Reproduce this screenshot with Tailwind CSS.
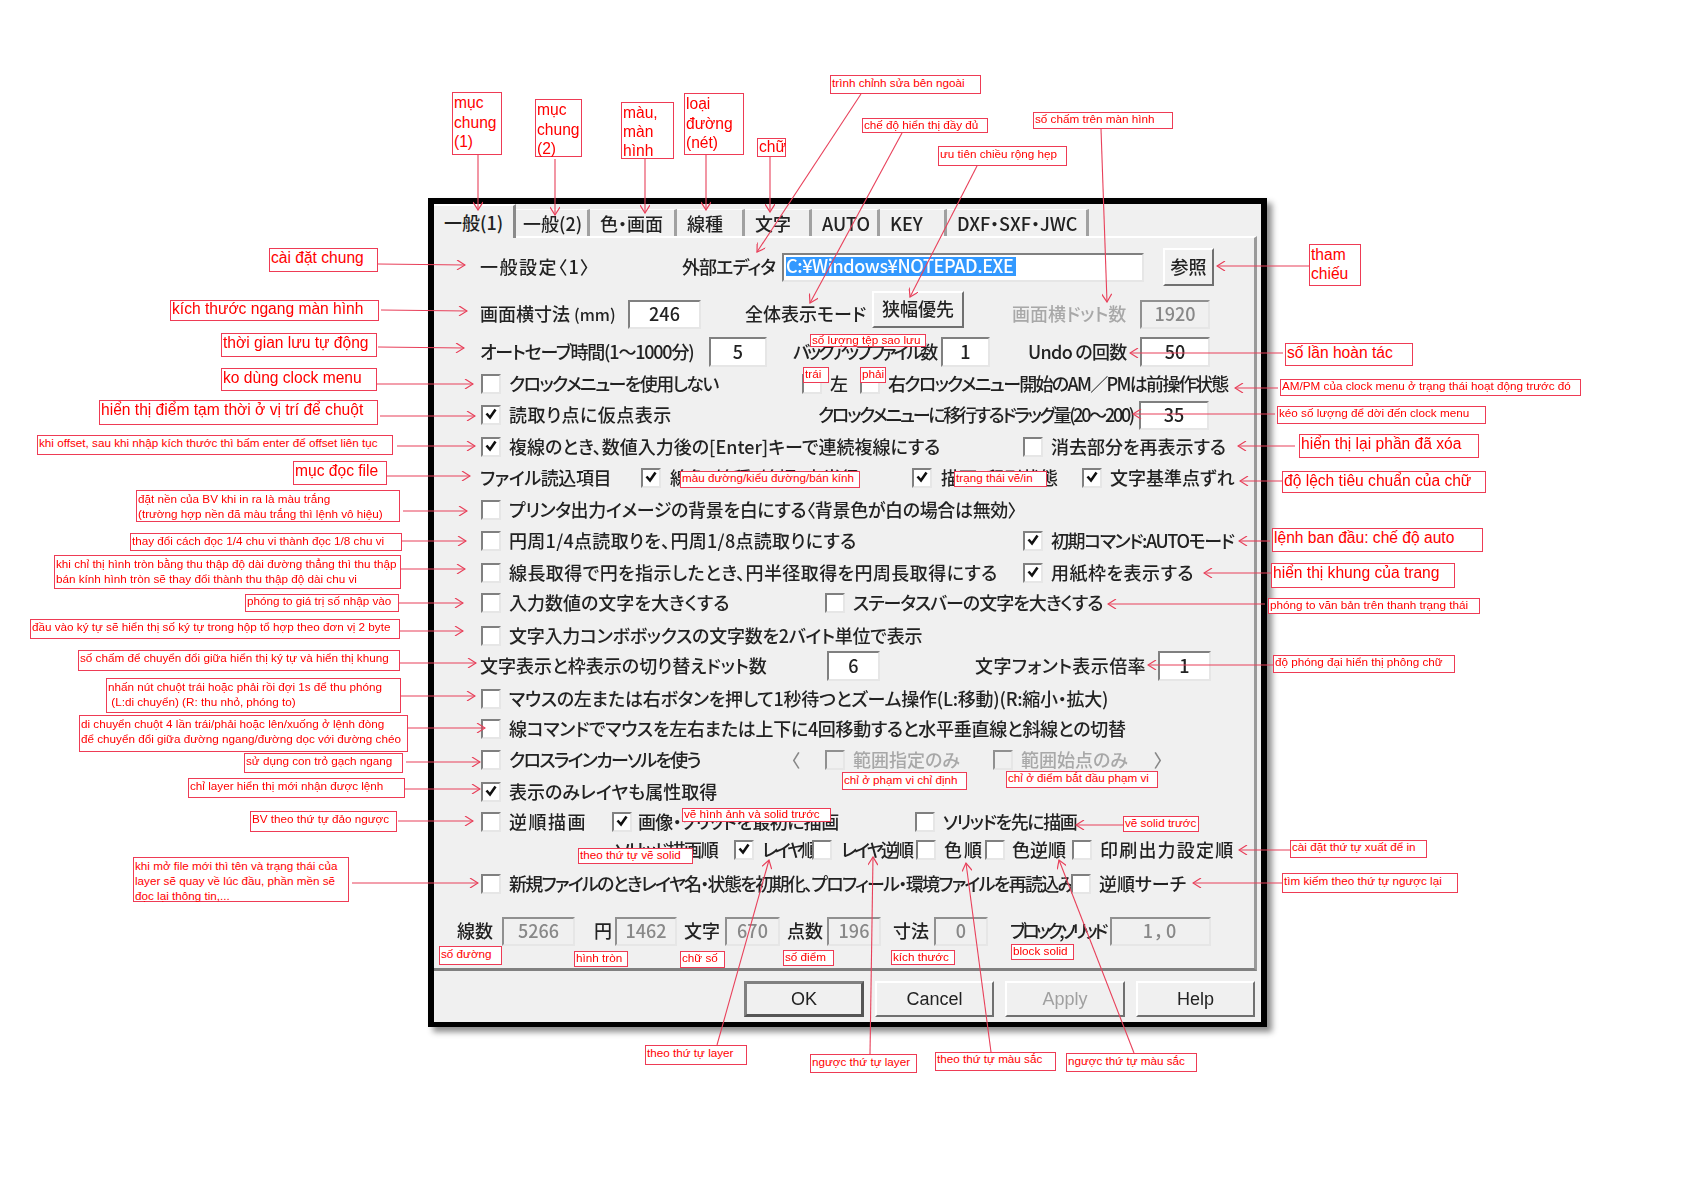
<!DOCTYPE html>
<html lang="ja">
<head>
  <meta charset="UTF-8" />
  <title>一般(1)</title>
  <script src="https://cdn.jsdelivr.net/npm/@tailwindcss/browser@4"></script>
</head>
<body class="bg-white">
<div class="relative w-[1684px] h-[1191px] overflow-hidden bg-white">

  <!-- Dialog window -->
  <div class="absolute left-[428px] top-[198px] w-[839px] h-[829px] box-border border-[6px] border-b-[5px] border-black bg-[#f0f0f0] shadow-[5px_5px_6px_rgba(0,0,0,0.45)] text-[18px] leading-[24px] font-medium text-[#222] whitespace-nowrap font-['Noto_Sans_CJK_JP',sans-serif] [font-feature-settings:'palt'] blur-[0.4px]">

    <!-- Tabs -->
    <div class="flex items-end h-[32px]">
      <div class="relative flex items-center w-[82px] h-[34px] -mb-[2px] pl-[10px] bg-[#f0f0f0] border-t-2 border-t-white border-r-[3px] border-r-[#8a8a8a]">一般(1)</div>
      <div class="flex items-center w-[74px] h-[27px] pl-[7px] border-t border-t-white border-r-[3px] border-r-[#a0a0a0]">一般(2)</div>
      <div class="flex items-center w-[87px] h-[27px] pl-[10px] border-t border-t-white border-r-[3px] border-r-[#a0a0a0]">色・画面</div>
      <div class="flex items-center w-[68px] h-[27px] pl-[10px] border-t border-t-white border-r-[3px] border-r-[#a0a0a0]">線種</div>
      <div class="flex items-center w-[67px] h-[27px] pl-[10px] border-t border-t-white border-r-[3px] border-r-[#a0a0a0]">文字</div>
      <div class="flex items-center w-[68px] h-[27px] pl-[10px] border-t border-t-white border-r-[3px] border-r-[#a0a0a0]">AUTO</div>
      <div class="flex items-center w-[67px] h-[27px] pl-[10px] border-t border-t-white border-r-[3px] border-r-[#a0a0a0]">KEY</div>
      <div class="flex items-center w-[142px] h-[27px] pl-[10px] border-t border-t-white border-r-[3px] border-r-[#a0a0a0]">DXF・SXF・JWC</div>
    </div>

    <!-- Tab page -->
    <div class="box-border w-[823px] h-[735px] pt-[15px] pl-[46px] border-t-2 border-t-white border-r-[3px] border-r-[#9a9a9a] border-b-[3px] border-b-[#808080] [&_span]:pb-[2px]">

      <div class="flex items-center h-7">
        <span class="w-[107px] tracking-[1.5px]">一般設定〈1〉</span>
        <span class="ml-[95px] w-[93px] tracking-[-0.9px]">外部エディタ</span>
        <span class="ml-[7px] flex items-center box-border w-[362px] h-[29px] pl-[2px] bg-white border-2 border-t-[#808080] border-l-[#808080] border-r-[#e6e6e6] border-b-[#e6e6e6]"><span class="flex items-center w-[230px] h-[19px] bg-[#3399ff] text-white tracking-[-0.4px]">C:¥Windows¥NOTEPAD.EXE</span></span>
        <span class="ml-[19px] flex items-center justify-center box-border w-[51px] h-[38px] shrink-0 border-2 border-t-white border-l-white border-r-[#707070] border-b-[#707070]">参照</span>
      </div>

      <div class="flex items-center h-7 mt-[19px]">
        <span class="w-[137px]">画面横寸法 <span class="text-[16px]">(mm)</span></span>
        <span class="ml-[11px] flex items-center justify-center box-border w-[73px] h-[29px] bg-white border-2 border-t-[#808080] border-l-[#808080] border-r-[#e6e6e6] border-b-[#e6e6e6]">246</span>
        <span class="ml-[44px] w-[122px]">全体表示モード</span>
        <span class="ml-[5px] -mt-[10px] flex items-center justify-center box-border w-[92px] h-[37px] border-2 border-t-white border-l-white border-r-[#707070] border-b-[#707070]">狭幅優先</span>
        <span class="ml-[48px] w-[115px] text-[#a8a8a8]">画面横ドット数</span>
        <span class="ml-[13px] flex items-center justify-center box-border w-[70px] h-[29px] text-[#888] border-2 border-t-[#909090] border-l-[#909090] border-r-[#e6e6e6] border-b-[#e6e6e6]">1920</span>
      </div>

      <div class="flex items-center h-7 mt-[10px]">
        <span class="w-[213px] tracking-[-1.2px]">オートセーブ時間(1～1000分)</span>
        <span class="ml-[16px] flex items-center justify-center box-border w-[58px] h-[30px] bg-white border-2 border-t-[#808080] border-l-[#808080] border-r-[#e6e6e6] border-b-[#e6e6e6]">5</span>
        <span class="ml-[26px] w-[138px] tracking-[-3px]">バックアップファイル数</span>
        <span class="ml-[10px] flex items-center justify-center box-border w-[49px] h-[30px] bg-white border-2 border-t-[#808080] border-l-[#808080] border-r-[#e6e6e6] border-b-[#e6e6e6]">1</span>
        <span class="ml-[38px] w-[99px] tracking-[-0.7px]">Undo の回数</span>
        <span class="ml-[13px] flex items-center justify-center box-border w-[70px] h-[30px] bg-white border-2 border-t-[#808080] border-l-[#808080] border-r-[#e6e6e6] border-b-[#e6e6e6]">50</span>
      </div>

      <div class="flex items-center h-7 mt-[4px]">
        <span class="ml-[1px] box-border size-5 shrink-0 bg-white border-2 border-t-[#808080] border-l-[#808080] border-r-[#e6e6e6] border-b-[#e6e6e6]"></span>
        <span class="ml-[8px] w-[209px] tracking-[-1.6px]">クロックメニューを使用しない</span>
        <span class="ml-[84px] box-border size-5 shrink-0 bg-white border-2 border-t-[#808080] border-l-[#808080] border-r-[#e6e6e6] border-b-[#e6e6e6]"></span>
        <span class="ml-[8px] w-[19px]">左</span>
        <span class="ml-[11px] box-border size-5 shrink-0 bg-white border-2 border-t-[#808080] border-l-[#808080] border-r-[#e6e6e6] border-b-[#e6e6e6]"></span>
        <span class="ml-[8px] w-[341px] tracking-[-1.7px]">右クロックメニュー開始のAM／PMは前操作状態</span>
      </div>

      <div class="flex items-center h-7 mt-[3px]">
        <span class="ml-[1px] flex items-center justify-center box-border size-5 shrink-0 bg-white border-2 border-t-[#808080] border-l-[#808080] border-r-[#e6e6e6] border-b-[#e6e6e6]"><svg viewBox="0 0 14 14" class="size-[14px]"><path d="M2.5 6.5 L6 10.5 L11.5 2.5" fill="none" stroke="#111" stroke-width="2.6"/></svg></span>
        <span class="ml-[8px] w-[162px] tracking-[0.5px]">読取り点に仮点表示</span>
        <span class="ml-[147px] w-[314px] tracking-[-2.3px]">クロックメニューに移行するドラッグ量(20～200)</span>
        <span class="ml-[7px] flex items-center justify-center box-border w-[70px] h-[29px] bg-white border-2 border-t-[#808080] border-l-[#808080] border-r-[#e6e6e6] border-b-[#e6e6e6]">35</span>
      </div>

      <div class="flex items-center h-7 mt-[4px]">
        <span class="ml-[1px] flex items-center justify-center box-border size-5 shrink-0 bg-white border-2 border-t-[#808080] border-l-[#808080] border-r-[#e6e6e6] border-b-[#e6e6e6]"><svg viewBox="0 0 14 14" class="size-[14px]"><path d="M2.5 6.5 L6 10.5 L11.5 2.5" fill="none" stroke="#111" stroke-width="2.6"/></svg></span>
        <span class="ml-[8px] w-[428px]">複線のとき、数値入力後の[Enter]キーで連続複線にする</span>
        <span class="ml-[86px] box-border size-5 shrink-0 bg-white border-2 border-t-[#808080] border-l-[#808080] border-r-[#e6e6e6] border-b-[#e6e6e6]"></span>
        <span class="ml-[8px] w-[180px]">消去部分を再表示する</span>
      </div>

      <div class="flex items-center h-7 mt-[3px]">
        <span class="w-[129px] tracking-[-0.4px]">ファイル読込項目</span>
        <span class="ml-[32px] flex items-center justify-center box-border size-5 shrink-0 bg-white border-2 border-t-[#808080] border-l-[#808080] border-r-[#e6e6e6] border-b-[#e6e6e6]"><svg viewBox="0 0 14 14" class="size-[14px]"><path d="M2.5 6.5 L6 10.5 L11.5 2.5" fill="none" stroke="#111" stroke-width="2.6"/></svg></span>
        <span class="ml-[9px] w-[237px]">線色・線種・線幅・点半径</span>
        <span class="ml-[5px] flex items-center justify-center box-border size-5 shrink-0 bg-white border-2 border-t-[#808080] border-l-[#808080] border-r-[#e6e6e6] border-b-[#e6e6e6]"><svg viewBox="0 0 14 14" class="size-[14px]"><path d="M2.5 6.5 L6 10.5 L11.5 2.5" fill="none" stroke="#111" stroke-width="2.6"/></svg></span>
        <span class="ml-[9px] w-[123px]">描画・印刷状態</span>
        <span class="ml-[18px] flex items-center justify-center box-border size-5 shrink-0 bg-white border-2 border-t-[#808080] border-l-[#808080] border-r-[#e6e6e6] border-b-[#e6e6e6]"><svg viewBox="0 0 14 14" class="size-[14px]"><path d="M2.5 6.5 L6 10.5 L11.5 2.5" fill="none" stroke="#111" stroke-width="2.6"/></svg></span>
        <span class="ml-[8px] w-[127px]">文字基準点ずれ</span>
      </div>

      <div class="flex items-center h-7 mt-[4px]">
        <span class="ml-[1px] box-border size-5 shrink-0 bg-white border-2 border-t-[#808080] border-l-[#808080] border-r-[#e6e6e6] border-b-[#e6e6e6]"></span>
        <span class="ml-[8px] w-[505px] tracking-[-0.35px]">プリンタ出力イメージの背景を白にする〈背景色が白の場合は無効〉</span>
      </div>

      <div class="flex items-center h-7 mt-[3px]">
        <span class="ml-[1px] box-border size-5 shrink-0 bg-white border-2 border-t-[#808080] border-l-[#808080] border-r-[#e6e6e6] border-b-[#e6e6e6]"></span>
        <span class="ml-[8px] w-[346px] tracking-[0.3px]">円周1/4点読取りを、円周1/8点読取りにする</span>
        <span class="ml-[168px] flex items-center justify-center box-border size-5 shrink-0 bg-white border-2 border-t-[#808080] border-l-[#808080] border-r-[#e6e6e6] border-b-[#e6e6e6]"><svg viewBox="0 0 14 14" class="size-[14px]"><path d="M2.5 6.5 L6 10.5 L11.5 2.5" fill="none" stroke="#111" stroke-width="2.6"/></svg></span>
        <span class="ml-[8px] w-[182px] tracking-[-1.4px]">初期コマンド:AUTOモード</span>
      </div>

      <div class="flex items-center h-7 mt-[4px]">
        <span class="ml-[1px] box-border size-5 shrink-0 bg-white border-2 border-t-[#808080] border-l-[#808080] border-r-[#e6e6e6] border-b-[#e6e6e6]"></span>
        <span class="ml-[8px] w-[487px] tracking-[0.4px]">線長取得で円を指示したとき、円半径取得を円周長取得にする</span>
        <span class="ml-[27px] flex items-center justify-center box-border size-5 shrink-0 bg-white border-2 border-t-[#808080] border-l-[#808080] border-r-[#e6e6e6] border-b-[#e6e6e6]"><svg viewBox="0 0 14 14" class="size-[14px]"><path d="M2.5 6.5 L6 10.5 L11.5 2.5" fill="none" stroke="#111" stroke-width="2.6"/></svg></span>
        <span class="ml-[8px] w-[141px] tracking-[0.5px]">用紙枠を表示する</span>
      </div>

      <div class="flex items-center h-7 mt-[2px]">
        <span class="ml-[1px] box-border size-5 shrink-0 bg-white border-2 border-t-[#808080] border-l-[#808080] border-r-[#e6e6e6] border-b-[#e6e6e6]"></span>
        <span class="ml-[8px] w-[220px]">入力数値の文字を大きくする</span>
        <span class="ml-[96px] box-border size-5 shrink-0 bg-white border-2 border-t-[#808080] border-l-[#808080] border-r-[#e6e6e6] border-b-[#e6e6e6]"></span>
        <span class="ml-[8px] w-[248px] tracking-[-1px]">ステータスバーの文字を大きくする</span>
      </div>

      <div class="flex items-center h-7 mt-[5px]">
        <span class="ml-[1px] box-border size-5 shrink-0 bg-white border-2 border-t-[#808080] border-l-[#808080] border-r-[#e6e6e6] border-b-[#e6e6e6]"></span>
        <span class="ml-[8px] w-[413px] tracking-[-0.25px]">文字入力コンボボックスの文字数を2バイト単位で表示</span>
      </div>

      <div class="flex items-center h-7 mt-[2px]">
        <span class="w-[288px]">文字表示と枠表示の切り替えドット数</span>
        <span class="ml-[59px] flex items-center justify-center box-border w-[53px] h-[30px] bg-white border-2 border-t-[#808080] border-l-[#808080] border-r-[#e6e6e6] border-b-[#e6e6e6]">6</span>
        <span class="ml-[95px] w-[168px] tracking-[0.4px]">文字フォント表示倍率</span>
        <span class="ml-[15px] flex items-center justify-center box-border w-[53px] h-[30px] bg-white border-2 border-t-[#808080] border-l-[#808080] border-r-[#e6e6e6] border-b-[#e6e6e6]">1</span>
      </div>

      <div class="flex items-center h-7 mt-[5px]">
        <span class="ml-[1px] box-border size-5 shrink-0 bg-white border-2 border-t-[#808080] border-l-[#808080] border-r-[#e6e6e6] border-b-[#e6e6e6]"></span>
        <span class="ml-[8px] w-[598px] tracking-[-0.25px]">マウスの左または右ボタンを押して1秒待つとズーム操作(L:移動)(R:縮小・拡大)</span>
      </div>

      <div class="flex items-center h-7 mt-[2px]">
        <span class="ml-[1px] box-border size-5 shrink-0 bg-white border-2 border-t-[#808080] border-l-[#808080] border-r-[#e6e6e6] border-b-[#e6e6e6]"></span>
        <span class="ml-[8px] w-[615px] tracking-[-0.3px]">線コマンドでマウスを左右または上下に4回移動すると水平垂直線と斜線との切替</span>
      </div>

      <div class="flex items-center h-7 mt-[3px]">
        <span class="ml-[1px] box-border size-5 shrink-0 bg-white border-2 border-t-[#808080] border-l-[#808080] border-r-[#e6e6e6] border-b-[#e6e6e6]"></span>
        <span class="ml-[8px] w-[190px] tracking-[-1.7px]">クロスラインカーソルを使う</span>
        <span class="ml-[92px] w-[10px] text-[#888]">〈</span>
        <span class="ml-[24px] box-border size-5 shrink-0 border-2 border-t-[#909090] border-l-[#909090] border-r-[#e6e6e6] border-b-[#e6e6e6]"></span>
        <span class="ml-[8px] w-[110px] text-[#a8a8a8]">範囲指定のみ</span>
        <span class="ml-[30px] box-border size-5 shrink-0 border-2 border-t-[#909090] border-l-[#909090] border-r-[#e6e6e6] border-b-[#e6e6e6]"></span>
        <span class="ml-[8px] w-[109px] text-[#a8a8a8]">範囲始点のみ</span>
        <span class="ml-[24px] text-[#888]">〉</span>
      </div>

      <div class="flex items-center h-7 mt-[4px]">
        <span class="ml-[1px] flex items-center justify-center box-border size-5 shrink-0 bg-white border-2 border-t-[#808080] border-l-[#808080] border-r-[#e6e6e6] border-b-[#e6e6e6]"><svg viewBox="0 0 14 14" class="size-[14px]"><path d="M2.5 6.5 L6 10.5 L11.5 2.5" fill="none" stroke="#111" stroke-width="2.6"/></svg></span>
        <span class="ml-[8px] w-[208px]">表示のみレイヤも属性取得</span>
      </div>

      <div class="flex items-center h-7 mt-[2px]">
        <span class="ml-[1px] box-border size-5 shrink-0 bg-white border-2 border-t-[#808080] border-l-[#808080] border-r-[#e6e6e6] border-b-[#e6e6e6]"></span>
        <span class="ml-[8px] w-[76px] tracking-[1.5px]">逆順描画</span>
        <span class="ml-[27px] flex items-center justify-center box-border size-5 shrink-0 bg-white border-2 border-t-[#808080] border-l-[#808080] border-r-[#e6e6e6] border-b-[#e6e6e6]"><svg viewBox="0 0 14 14" class="size-[14px]"><path d="M2.5 6.5 L6 10.5 L11.5 2.5" fill="none" stroke="#111" stroke-width="2.6"/></svg></span>
        <span class="ml-[6px] w-[199px] tracking-[-0.65px]">画像・ソリッドを最初に描画</span>
        <span class="ml-[78px] box-border size-5 shrink-0 bg-white border-2 border-t-[#808080] border-l-[#808080] border-r-[#e6e6e6] border-b-[#e6e6e6]"></span>
        <span class="ml-[8px] w-[131px] tracking-[-1.4px]">ソリッドを先に描画</span>
      </div>

      <div class="flex items-center h-7">
        <span class="ml-[135px] w-[103px] tracking-[-1.4px]">ソリッド描画順</span>
        <span class="ml-[16px] flex items-center justify-center box-border size-5 shrink-0 bg-white border-2 border-t-[#808080] border-l-[#808080] border-r-[#e6e6e6] border-b-[#e6e6e6]"><svg viewBox="0 0 14 14" class="size-[14px]"><path d="M2.5 6.5 L6 10.5 L11.5 2.5" fill="none" stroke="#111" stroke-width="2.6"/></svg></span>
        <span class="ml-[8px] w-[46px] tracking-[-3px]">レイヤ順</span>
        <span class="ml-[4px] box-border size-5 shrink-0 bg-white border-2 border-t-[#808080] border-l-[#808080] border-r-[#e6e6e6] border-b-[#e6e6e6]"></span>
        <span class="ml-[9px] w-[64px] tracking-[-2.8px]">レイヤ逆順</span>
        <span class="ml-[11px] box-border size-5 shrink-0 bg-white border-2 border-t-[#808080] border-l-[#808080] border-r-[#e6e6e6] border-b-[#e6e6e6]"></span>
        <span class="ml-[8px] w-[41px] tracking-[2px]">色順</span>
        <span class="box-border size-5 shrink-0 bg-white border-2 border-t-[#808080] border-l-[#808080] border-r-[#e6e6e6] border-b-[#e6e6e6]"></span>
        <span class="ml-[7px] w-[54px]">色逆順</span>
        <span class="ml-[6px] box-border size-5 shrink-0 bg-white border-2 border-t-[#808080] border-l-[#808080] border-r-[#e6e6e6] border-b-[#e6e6e6]"></span>
        <span class="ml-[8px] w-[136px] tracking-[1.2px]">印刷出力設定順</span>
      </div>

      <div class="flex items-center h-7 mt-[6px]">
        <span class="ml-[1px] box-border size-5 shrink-0 bg-white border-2 border-t-[#808080] border-l-[#808080] border-r-[#e6e6e6] border-b-[#e6e6e6]"></span>
        <span class="ml-[8px] w-[560px] tracking-[-1.7px]">新規ファイルのときレイヤ名・状態を初期化、プロフィール・環境ファイルを再読込み</span>
        <span class="ml-[2px] box-border size-5 shrink-0 bg-white border-2 border-t-[#808080] border-l-[#808080] border-r-[#e6e6e6] border-b-[#e6e6e6]"></span>
        <span class="ml-[8px] w-[85px]">逆順サーチ</span>
      </div>

      <!-- Counters -->
      <div class="flex items-center h-7 mt-[19px]">
        <span class="-ml-[23px] w-[37px]">線数</span>
        <span class="ml-[8px] flex items-center justify-center box-border w-[73px] h-[29px] text-[#888] border-2 border-t-[#909090] border-l-[#909090] border-r-[#e6e6e6] border-b-[#e6e6e6]">5266</span>
        <span class="ml-[19px] w-[21px]">円</span>
        <span class="flex items-center justify-center box-border w-[62px] h-[29px] text-[#888] border-2 border-t-[#909090] border-l-[#909090] border-r-[#e6e6e6] border-b-[#e6e6e6]">1462</span>
        <span class="ml-[7px] w-[38px]">文字</span>
        <span class="ml-[3px] flex items-center justify-center box-border w-[55px] h-[29px] text-[#888] border-2 border-t-[#909090] border-l-[#909090] border-r-[#e6e6e6] border-b-[#e6e6e6]">670</span>
        <span class="ml-[7px] w-[38px]">点数</span>
        <span class="ml-[2px] flex items-center justify-center box-border w-[54px] h-[29px] text-[#888] border-2 border-t-[#909090] border-l-[#909090] border-r-[#e6e6e6] border-b-[#e6e6e6]">196</span>
        <span class="ml-[12px] w-[37px]">寸法</span>
        <span class="ml-[4px] flex items-center justify-center box-border w-[54px] h-[29px] text-[#888] border-2 border-t-[#909090] border-l-[#909090] border-r-[#e6e6e6] border-b-[#e6e6e6]">0</span>
        <span class="ml-[22px] w-[97px] tracking-[-3.6px]">ブロック,ソリッド</span>
        <span class="ml-[3px] flex items-center justify-center box-border w-[101px] h-[29px] text-[#888] tracking-[2px] border-2 border-t-[#909090] border-l-[#909090] border-r-[#e6e6e6] border-b-[#e6e6e6]">1，0</span>
      </div>
    </div>

    <!-- Dialog buttons -->
    <div class="flex gap-[11px] mt-[10px] pl-[310px] font-['Liberation_Sans',sans-serif]">
      <div class="flex items-center justify-center box-border w-[120px] h-[36px] border-[3px] border-t-[#808080] border-l-[#808080] border-r-[#555] border-b-[#555]">OK</div>
      <div class="flex items-center justify-center box-border w-[119px] h-[36px] border-2 border-t-white border-l-white border-r-[#707070] border-b-[#707070]">Cancel</div>
      <div class="flex items-center justify-center box-border w-[120px] h-[36px] text-[#a0a0a0] border-2 border-t-white border-l-white border-r-[#707070] border-b-[#707070]">Apply</div>
      <div class="flex items-center justify-center box-border w-[119px] h-[36px] border-2 border-t-white border-l-white border-r-[#707070] border-b-[#707070]">Help</div>
    </div>
  </div>

  <!-- Callout lines -->
  <svg class="absolute left-0 top-0" width="1684" height="1191" viewBox="0 0 1684 1191">
    <defs>
      <marker id="a" viewBox="0 0 10 10" refX="9" refY="5" markerWidth="10" markerHeight="10" markerUnits="userSpaceOnUse" orient="auto">
        <path d="M1 0 L9 5 L1 10" fill="none" stroke="#e8405a" stroke-width="1.2"/>
      </marker>
    </defs>
    <g fill="none" stroke="#e8405a" stroke-width="1.1">
      <path marker-end="url(#a)" d="M478 155 L478 210"/>
      <path marker-end="url(#a)" d="M555 159 L555 215"/>
      <path marker-end="url(#a)" d="M645 159 L645 213"/>
      <path marker-end="url(#a)" d="M706 155 L706 210"/>
      <path marker-end="url(#a)" d="M770 157 L770 212"/>
      <path marker-end="url(#a)" d="M861 94 L757 252"/>
      <path marker-end="url(#a)" d="M902 133 L810 303"/>
      <path marker-end="url(#a)" d="M977 166 L910 297"/>
      <path marker-end="url(#a)" d="M1101 129 L1107 302"/>

      <path marker-end="url(#a)" d="M378 264 L465 265"/>
      <path marker-end="url(#a)" d="M381 310 L467 311"/>
      <path marker-end="url(#a)" d="M378 347 L464 348"/>
      <path marker-end="url(#a)" d="M377 384 L473 384"/>
      <path marker-end="url(#a)" d="M380 416 L475 416"/>
      <path marker-end="url(#a)" d="M397 446 L475 446"/>
      <path marker-end="url(#a)" d="M387 476 L470 476"/>
      <path marker-end="url(#a)" d="M403 511 L467 511"/>
      <path marker-end="url(#a)" d="M402 541 L466 541"/>
      <path marker-end="url(#a)" d="M401 569 L465 569"/>
      <path marker-end="url(#a)" d="M399 603 L463 603"/>
      <path marker-end="url(#a)" d="M400 631 L463 631"/>
      <path marker-end="url(#a)" d="M400 663 L476 663"/>
      <path marker-end="url(#a)" d="M401 696 L475 696"/>
      <path marker-end="url(#a)" d="M408 728 L485 728"/>
      <path marker-end="url(#a)" d="M406 762 L480 762"/>
      <path marker-end="url(#a)" d="M405 789 L480 789"/>
      <path marker-end="url(#a)" d="M398 821 L473 821"/>
      <path marker-end="url(#a)" d="M352 883 L478 883"/>

      <path marker-end="url(#a)" d="M1309 266 L1217 266"/>
      <path marker-end="url(#a)" d="M1283 353 L1130 353"/>
      <path marker-end="url(#a)" d="M1278 388 L1235 388"/>
      <path marker-end="url(#a)" d="M1275 414 L1133 414"/>
      <path marker-end="url(#a)" d="M1295 446 L1238 446"/>
      <path marker-end="url(#a)" d="M1282 481 L1240 481"/>
      <path marker-end="url(#a)" d="M1270 541 L1239 541"/>
      <path marker-end="url(#a)" d="M1271 573 L1204 573"/>
      <path marker-end="url(#a)" d="M1265 604 L1108 604"/>
      <path marker-end="url(#a)" d="M1273 665 L1148 665"/>
      <path marker-end="url(#a)" d="M1123 825 L1076 825"/>
      <path marker-end="url(#a)" d="M1290 850 L1239 850"/>
      <path marker-end="url(#a)" d="M1282 883 L1193 883"/>

      <path marker-end="url(#a)" d="M717 1045 L769 860"/>
      <path marker-end="url(#a)" d="M870 1054 L873 857"/>
      <path marker-end="url(#a)" d="M991 1052 L966 863"/>
      <path marker-end="url(#a)" d="M1134 1053 L1059 860"/>
    </g>
  </svg>

  <!-- Callout labels -->
  <div class="*:absolute *:box-border *:bg-white *:border-[1.5px] *:border-[#ee3b55] *:text-[#f00] *:pl-[1px] *:whitespace-nowrap font-['Liberation_Sans',sans-serif]">
    <div class="left-[452px] top-[92px] w-[50px] h-[63px] text-[15.6px] leading-[19.5px]">mục<br>chung<br>(1)</div>
    <div class="left-[535px] top-[99px] w-[47px] h-[58px] text-[15.6px] leading-[19.5px]">mục<br>chung<br>(2)</div>
    <div class="left-[621px] top-[102px] w-[53px] h-[57px] text-[15.6px] leading-[19px]">màu,<br>màn<br>hình</div>
    <div class="left-[684px] top-[93px] w-[60px] h-[62px] text-[15.6px] leading-[19.5px]">loại<br>đường<br>(nét)</div>
    <div class="left-[757px] top-[138px] w-[29px] h-[19px] text-[15.6px] leading-[15px]">chữ</div>
    <div class="left-[830px] top-[75px] w-[151px] h-[19px] text-[11.7px] leading-[13px]">trình chỉnh sửa bên ngoài</div>
    <div class="left-[862px] top-[118px] w-[126px] h-[15px] text-[11.7px] leading-[11px]">chế độ hiển thị đầy đủ</div>
    <div class="left-[938px] top-[146px] w-[129px] h-[20px] text-[11.7px] leading-[13px]">ưu tiên chiều rộng hẹp</div>
    <div class="left-[1033px] top-[112px] w-[140px] h-[17px] text-[11.7px] leading-[12px]">số chấm trên màn hình</div>
    <div class="left-[810px] top-[334px] w-[116px] h-[13px] text-[11.7px] leading-[9px]">số lượng tệp sao lưu</div>
    <div class="left-[803px] top-[367px] w-[26px] h-[16px] text-[11.7px] leading-[11px]">trái</div>
    <div class="left-[860px] top-[367px] w-[26px] h-[16px] text-[11.7px] leading-[11px]">phải</div>

    <div class="left-[269px] top-[248px] w-[109px] h-[24px] text-[15.6px] leading-[17px]">cài đặt chung</div>
    <div class="left-[170px] top-[300px] w-[209px] h-[21px] text-[15.6px] leading-[16px]">kích thước ngang màn hình</div>
    <div class="left-[221px] top-[333px] w-[156px] h-[24px] text-[15.6px] leading-[17px]">thời gian lưu tự động</div>
    <div class="left-[221px] top-[368px] w-[156px] h-[23px] text-[15.6px] leading-[17px]">ko dùng clock menu</div>
    <div class="left-[99px] top-[400px] w-[279px] h-[25px] text-[15.6px] leading-[17px]">hiển thị điểm tạm thời ở vị trí để chuột</div>
    <div class="left-[37px] top-[435px] w-[356px] h-[20px] text-[11.7px] leading-[13px]">khi offset, sau khi nhập kích thước thì bấm enter để offset liên tục</div>
    <div class="left-[293px] top-[461px] w-[94px] h-[24px] text-[15.6px] leading-[17px]">mục đọc file</div>
    <div class="left-[136px] top-[490px] w-[264px] h-[32px] text-[11.7px] leading-[15px]">đặt nền của BV khi in ra là màu trắng<br>(trường hợp nền đã màu trắng thì lệnh vô hiệu)</div>
    <div class="left-[130px] top-[533px] w-[272px] h-[18px] text-[11.7px] leading-[13px]">thay đổi cách đọc 1/4 chu vi thành đọc 1/8 chu vi</div>
    <div class="left-[54px] top-[555px] w-[347px] h-[34px] text-[11.7px] leading-[15px]">khi chỉ thị hình tròn bằng thu thập độ dài đường thẳng thì thu thập<br>bán kính hình tròn sẽ thay đổi thành thu thập độ dài chu vi</div>
    <div class="left-[245px] top-[594px] w-[154px] h-[18px] text-[11.7px] leading-[12px]">phóng to giá trị số nhập vào</div>
    <div class="left-[30px] top-[619px] w-[370px] h-[20px] text-[11.7px] leading-[13px]">đầu vào ký tự sẽ hiển thị số ký tự trong hộp tổ hợp theo đơn vị 2 byte</div>
    <div class="left-[78px] top-[650px] w-[322px] h-[21px] text-[11.7px] leading-[13px]">số chấm để chuyển đổi giữa hiển thị ký tự và hiển thị khung</div>
    <div class="left-[106px] top-[678px] w-[295px] h-[35px] text-[11.7px] leading-[15px]">nhấn nút chuột trái hoặc phải rồi đợi 1s để thu phóng<br>&nbsp;(L:di chuyển) (R: thu nhỏ, phóng to)</div>
    <div class="left-[79px] top-[715px] w-[329px] h-[37px] text-[11.7px] leading-[15px]">di chuyển chuột 4 lần trái/phải hoặc lên/xuống ở lệnh đòng<br>để chuyển đổi giữa đường ngang/đường dọc với đường chéo</div>
    <div class="left-[244px] top-[753px] w-[159px] h-[20px] text-[11.7px] leading-[13px]">sử dụng con trỏ gạch ngang</div>
    <div class="left-[188px] top-[778px] w-[217px] h-[20px] text-[11.7px] leading-[13px]">chỉ layer hiển thị mới nhận được lệnh</div>
    <div class="left-[250px] top-[811px] w-[147px] h-[21px] text-[11.7px] leading-[13px]">BV theo thứ tự đảo ngược</div>
    <div class="left-[133px] top-[857px] w-[216px] h-[45px] text-[11.7px] leading-[15px]">khi mở file mới thì tên và trạng thái của<br>layer sẽ quay về lúc đầu, phần mền sẽ<br>đọc lại thông tin,...</div>

    <div class="left-[1309px] top-[244px] w-[52px] h-[42px] text-[15.6px] leading-[19px]">tham<br>chiếu</div>
    <div class="left-[1285px] top-[343px] w-[128px] h-[23px] text-[15.6px] leading-[17px]">số lần hoàn tác</div>
    <div class="left-[1280px] top-[379px] w-[301px] h-[17px] text-[11.7px] leading-[12px]">AM/PM của clock menu ở trạng thái hoạt động trước đó</div>
    <div class="left-[1277px] top-[406px] w-[209px] h-[18px] text-[11.7px] leading-[12px]">kéo số lượng để dời đến clock menu</div>
    <div class="left-[1299px] top-[434px] w-[180px] h-[24px] text-[15.6px] leading-[17px]">hiển thị lại phần đã xóa</div>
    <div class="left-[1282px] top-[471px] w-[204px] h-[22px] text-[15.6px] leading-[17px]">độ lệch tiêu chuẩn của chữ</div>
    <div class="left-[1272px] top-[528px] w-[211px] h-[24px] text-[15.6px] leading-[17px]">lệnh ban đầu: chế độ auto</div>
    <div class="left-[1271px] top-[563px] w-[184px] h-[25px] text-[15.6px] leading-[17px]">hiển thị khung của trang</div>
    <div class="left-[1268px] top-[598px] w-[212px] h-[16px] text-[11.7px] leading-[12px]">phóng to văn bản trên thanh trạng thái</div>
    <div class="left-[1273px] top-[655px] w-[182px] h-[18px] text-[11.7px] leading-[12px]">độ phóng đại hiển thị phông chữ</div>

    <div class="left-[680px] top-[471px] w-[180px] h-[17px] text-[11.7px] leading-[12px]">màu đường/kiểu đường/bán kính</div>
    <div class="left-[954px] top-[471px] w-[93px] h-[16px] text-[11.7px] leading-[12px]">trạng thái vẽ/in</div>
    <div class="left-[842px] top-[772px] w-[125px] h-[18px] text-[11.7px] leading-[13px]">chỉ ở phạm vi chỉ định</div>
    <div class="left-[1006px] top-[771px] w-[152px] h-[17px] text-[11.7px] leading-[12px]">chỉ ở điểm bắt đầu phạm vi</div>
    <div class="left-[682px] top-[808px] w-[149px] h-[14px] text-[11.7px] leading-[10px]">vẽ hình ảnh và solid trước</div>
    <div class="left-[1123px] top-[816px] w-[76px] h-[16px] text-[11.7px] leading-[11px]">vẽ solid trước</div>
    <div class="left-[578px] top-[848px] w-[115px] h-[16px] text-[11.7px] leading-[12px]">theo thứ tự vẽ solid</div>
    <div class="left-[439px] top-[946px] w-[63px] h-[19px] text-[11.7px] leading-[13px]">số đường</div>
    <div class="left-[574px] top-[951px] w-[54px] h-[16px] text-[11.7px] leading-[12px]">hình tròn</div>
    <div class="left-[680px] top-[951px] w-[45px] h-[17px] text-[11.7px] leading-[12px]">chữ số</div>
    <div class="left-[783px] top-[950px] w-[51px] h-[16px] text-[11.7px] leading-[12px]">số điểm</div>
    <div class="left-[891px] top-[950px] w-[64px] h-[15px] text-[11.7px] leading-[11px]">kích thước</div>
    <div class="left-[1011px] top-[944px] w-[63px] h-[16px] text-[11.7px] leading-[12px]">block solid</div>
    <div class="left-[645px] top-[1045px] w-[102px] h-[20px] text-[11.7px] leading-[13px]">theo thứ tự layer</div>
    <div class="left-[810px] top-[1054px] w-[107px] h-[19px] text-[11.7px] leading-[13px]">ngược thứ tự layer</div>
    <div class="left-[935px] top-[1052px] w-[121px] h-[19px] text-[11.7px] leading-[12px]">theo thứ tự màu sắc</div>
    <div class="left-[1066px] top-[1053px] w-[131px] h-[19px] text-[11.7px] leading-[13px]">ngược thứ tự màu sắc</div>
    <div class="left-[1290px] top-[840px] w-[137px] h-[18px] text-[11.7px] leading-[12px]">cài đặt thứ tự xuất để in</div>
    <div class="left-[1282px] top-[873px] w-[176px] h-[20px] text-[11.7px] leading-[13px]">tìm kiếm theo thứ tự ngược lại</div>
  </div>
</div>
</body>
</html>
